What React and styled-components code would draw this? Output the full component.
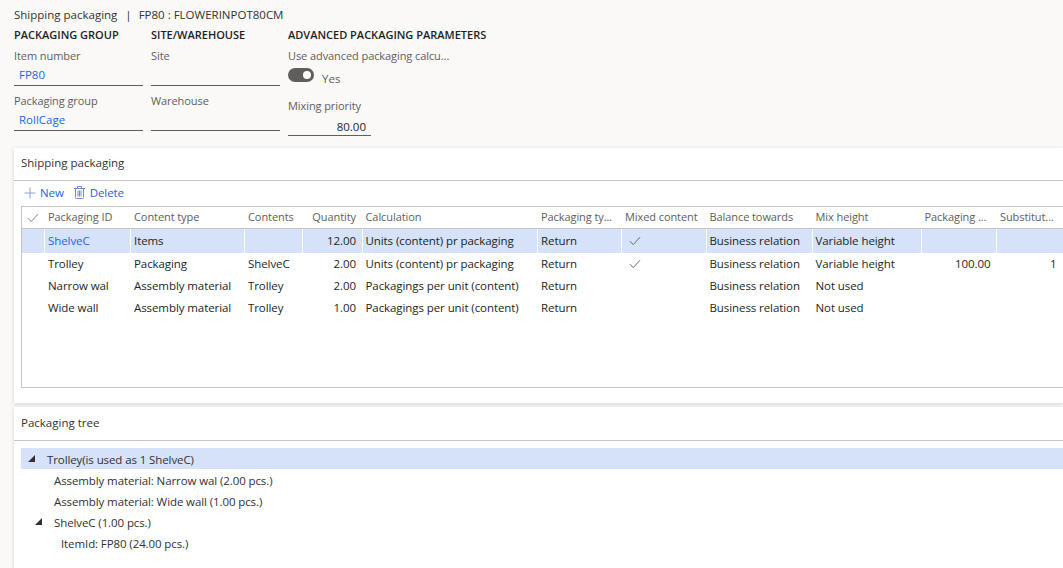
import React from 'react'
import styled, {createGlobalStyle} from 'styled-components'

const FONT = '"Open Sans", "Noto Sans", sans-serif'
const COLUMNS = '22px 86px 114px 57.5px 60px 175.5px 84px 84.5px 106px 109px 75.5px 66px 80px'

const GlobalStyle = createGlobalStyle`
  html, body {
    margin: 0;
    height: 100%;
    overflow: hidden;
    background: #faf9f8;
    font-family: ${FONT};
    font-size: 11.5px;
    color: #323130;
  }
`

const Page = styled.div`
  width: 1063px;
  height: 568px;
  overflow: hidden;
  display: flex;
  flex-direction: column;
`

const Header = styled.header`
  height: 148px;
  padding: 7px 0 0 14px;
  box-sizing: border-box;
  flex: none;
`

const Title = styled.div`
  line-height: 16px;
  font-size: 11.5px;
  span { margin: 0 7px 0 8px; }
`

const Groups = styled.div`
  display: flex;
  gap: 8px;
  margin-top: 4px;
`

const Group = styled.div`
  width: ${p => p.$width}px;
  flex: none;
`

const GroupTitle = styled.div`
  font-weight: 600;
  font-size: 11px;
  line-height: 16px;
  color: #201f1e;
  white-space: nowrap;
`

const Label = styled.div`
  color: #605e5c;
  font-size: 11px;
  letter-spacing: -0.08px;
  line-height: 16px;
  margin-top: ${p => p.$top ?? 5}px;
  white-space: nowrap;
`

const Input = styled.div`
  height: 19px;
  margin-top: 2px;
  border-bottom: 1px solid #605e5c;
  padding: 0 5px;
  line-height: ${p => p.$line || 18}px;
  color: ${p => (p.$link ? '#2266e3' : '#201f1e')};
  text-align: ${p => (p.$right ? 'right' : 'left')};
  width: ${p => p.$width || 'auto'};
  box-sizing: content-box;
`

const ToggleRow = styled.div`
  display: flex;
  align-items: flex-start;
  gap: 8px;
  height: 24px;
  margin-top: 4px;
`

const Toggle = styled.div`
  width: 26px;
  height: 14px;
  border-radius: 7px;
  background: #605e5c;
  position: relative;
  &::after {
    content: '';
    position: absolute;
    right: 3px;
    top: 3px;
    width: 8px;
    height: 8px;
    border-radius: 50%;
    background: #fff;
  }
`

const ToggleText = styled.span`
  color: #605e5c;
  line-height: 16px;
  margin-top: 3px;
`

const Panel = styled.section`
  margin-left: 14px;
  background: #fff;
  box-shadow: 0 1px 4px rgba(0, 0, 0, 0.16);
  flex: ${p => (p.$grow ? '1' : 'none')};
  height: ${p => (p.$grow ? 'auto' : `${p.$height}px`)};
  margin-top: ${p => p.$top || 0}px;
  box-sizing: border-box;
`

const PanelHead = styled.h2`
  margin: 0;
  height: ${p => p.$height}px;
  border-bottom: 1px solid #c8c6c4;
  padding-left: 7px;
  font-size: 11.5px;
  font-weight: 500;
  line-height: ${p => p.$height - 2}px;
  color: #323130;
  box-sizing: content-box;
`

const Toolbar = styled.div`
  display: flex;
  align-items: center;
  height: 25px;
  padding: 0 0 2px 10px;
  box-sizing: border-box;
  letter-spacing: -0.1px;
  color: #2266e3;
`

const ToolButton = styled.div`
  display: flex;
  align-items: center;
  gap: ${p => p.$gap}px;
  margin-right: 10px;
`

const GridBox = styled.div`
  margin-left: 7px;
  height: 182px;
  border: 1px solid #c8c6c4;
  border-right: 0;
  overflow: hidden;
  box-sizing: border-box;
`

const GridRow = styled.div`
  display: grid;
  grid-template-columns: ${COLUMNS};
  height: ${p => p.$height}px;
  background: ${p => (p.$selected ? '#d5e2f9' : 'transparent')};
  border-bottom: ${p => (p.$head ? '1px solid #c8c6c4' : '0')};
  color: ${p => (p.$head ? '#605e5c' : '#201f1e')};
  font-size: ${p => (p.$head ? '11px' : '11.5px')};
  letter-spacing: -0.08px;
  box-sizing: border-box;
  white-space: nowrap;
`

const Cell = styled.div`
  padding: 0 5.5px 0 4px;
  line-height: ${p => p.$line}px;
  text-align: ${p => (p.$right ? 'right' : 'left')};
  color: ${p => (p.$link ? '#2266e3' : 'inherit')};
  box-shadow: ${p => (p.$divide ? 'inset 1px 0 0 #fff' : 'none')};
  overflow: hidden;
  box-sizing: border-box;
`

const CheckCell = styled(Cell)`
  display: flex;
  align-items: center;
  padding: 0 0 0 ${p => p.$inset || 5}px;
`

const Tree = styled.div`
  padding-top: 7px;
`

const TreeRow = styled.div`
  display: flex;
  align-items: center;
  height: 21px;
  margin-left: 7px;
  padding: 1px 0 0 ${p => p.$indent}px;
  box-sizing: border-box;
  letter-spacing: -0.1px;
  background: ${p => (p.$selected ? '#d5e2f9' : 'transparent')};
  color: #323130;
`

const Arrow = styled.svg`
  width: 7px;
  height: 7px;
  flex: none;
  margin: -1px ${p => p.$gap}px 0 0;
`

const Check = ({color = '#605e5c'}) => (
  <svg width="12" height="10" viewBox="0 0 12 10" fill="none">
    <path d="M1 5.2 L4.2 8.6 L11 1.2" stroke={color} strokeWidth="0.9" />
  </svg>
)

const Plus = () => (
  <svg width="12" height="12" viewBox="0 0 12 12" fill="none">
    <path d="M6 0.5 V11.5 M0.5 6 H11.5" stroke="#8f9de6" strokeWidth="1" />
  </svg>
)

const Trash = () => (
  <svg width="11" height="13" viewBox="0 0 11 13" fill="none" stroke="#6f8ae0" strokeWidth="1">
    <path d="M0 2.5 H11 M3.5 2.5 V0.5 H7.5 V2.5 M1.5 2.5 V11.5 Q1.5 12.5 2.5 12.5 H8.5 Q9.5 12.5 9.5 11.5 V2.5 M4 4.5 V10.5 M5.5 4.5 V10.5 M7 4.5 V10.5" />
  </svg>
)

const TreeArrow = ({gap}) => (
  <Arrow $gap={gap} viewBox="0 0 7 7">
    <path d="M7 0 V7 H0 Z" fill="#323130" />
  </Arrow>
)

const HEADS = [
  'Packaging ID',
  'Content type',
  'Contents',
  'Quantity',
  'Calculation',
  'Packaging ty...',
  'Mixed content',
  'Balance towards',
  'Mix height',
  'Packaging ...',
  'Substitut...',
  ''
]

const ROWS = [
  ['ShelveC', 'Items', '', '12.00', 'Units (content) pr packaging', 'Return', true, 'Business relation', 'Variable height', '', ''],
  ['Trolley', 'Packaging', 'ShelveC', '2.00', 'Units (content) pr packaging', 'Return', true, 'Business relation', 'Variable height', '100.00', '1'],
  ['Narrow wal', 'Assembly material', 'Trolley', '2.00', 'Packagings per unit (content)', 'Return', false, 'Business relation', 'Not used', '', ''],
  ['Wide wall', 'Assembly material', 'Trolley', '1.00', 'Packagings per unit (content)', 'Return', false, 'Business relation', 'Not used', '', '']
]

const RIGHT_COLS = [3, 9, 10]

const DataRow = ({row, index}) => {
  const selected = index === 0
  const height = selected ? 24 : 22
  return (
    <GridRow $selected={selected} $height={height}>
      <Cell $line={height} />
      {row.map((value, i) => {
        if (i === 6) {
          return (
            <CheckCell key={i} $line={height} $divide={selected} $inset={8}>
              {value && <Check />}
            </CheckCell>
          )
        }
        return (
          <Cell
            key={i}
            $line={height}
            $divide={selected}
            $right={RIGHT_COLS.includes(i)}
            $link={selected && i === 0}
          >
            {value}
          </Cell>
        )
      })}
    </GridRow>
  )
}

export default function App() {
  return (
    <Page>
      <GlobalStyle />
      <Header>
        <Title>
          Shipping packaging<span>|</span>FP80 : FLOWERINPOT80CM
        </Title>
        <Groups>
          <Group $width={129}>
            <GroupTitle>PACKAGING GROUP</GroupTitle>
            <Label>Item number</Label>
            <Input $link>FP80</Input>
            <Label $top={7}>Packaging group</Label>
            <Input $link>RollCage</Input>
          </Group>
          <Group $width={129}>
            <GroupTitle>SITE/WAREHOUSE</GroupTitle>
            <Label>Site</Label>
            <Input />
            <Label $top={7}>Warehouse</Label>
            <Input />
          </Group>
          <Group $width={200}>
            <GroupTitle>ADVANCED PACKAGING PARAMETERS</GroupTitle>
            <Label>Use advanced packaging calcu...</Label>
            <ToggleRow>
              <Toggle />
              <ToggleText>Yes</ToggleText>
            </ToggleRow>
            <Label $top={6}>Mixing priority</Label>
            <Input $right $width="73px" $line={22}>80.00</Input>
          </Group>
        </Groups>
      </Header>
      <Panel $height={255}>
        <PanelHead $height={32}>Shipping packaging</PanelHead>
        <Toolbar>
          <ToolButton $gap={4}><Plus />New</ToolButton>
          <ToolButton $gap={5}><Trash />Delete</ToolButton>
        </Toolbar>
        <GridBox>
          <GridRow $head $height={22}>
            <CheckCell $line={20}><Check color="#797775" /></CheckCell>
            {HEADS.map((head, i) => (
              <Cell key={i} $line={20} $right={i === 3}>{head}</Cell>
            ))}
          </GridRow>
          {ROWS.map((row, i) => (
            <DataRow key={i} row={row} index={i} />
          ))}
        </GridBox>
      </Panel>
      <Panel $grow $top={4}>
        <PanelHead $height={33}>Packaging tree</PanelHead>
        <Tree>
          <TreeRow $selected $indent={7}>
            <TreeArrow gap={12} />
            Trolley(is used as 1 ShelveC)
          </TreeRow>
          <TreeRow $indent={33}>Assembly material: Narrow wal (2.00 pcs.)</TreeRow>
          <TreeRow $indent={33}>Assembly material: Wide wall (1.00 pcs.)</TreeRow>
          <TreeRow $indent={14}>
            <TreeArrow gap={12} />
            ShelveC (1.00 pcs.)
          </TreeRow>
          <TreeRow $indent={40}>ItemId: FP80 (24.00 pcs.)</TreeRow>
        </Tree>
      </Panel>
    </Page>
  )
}
